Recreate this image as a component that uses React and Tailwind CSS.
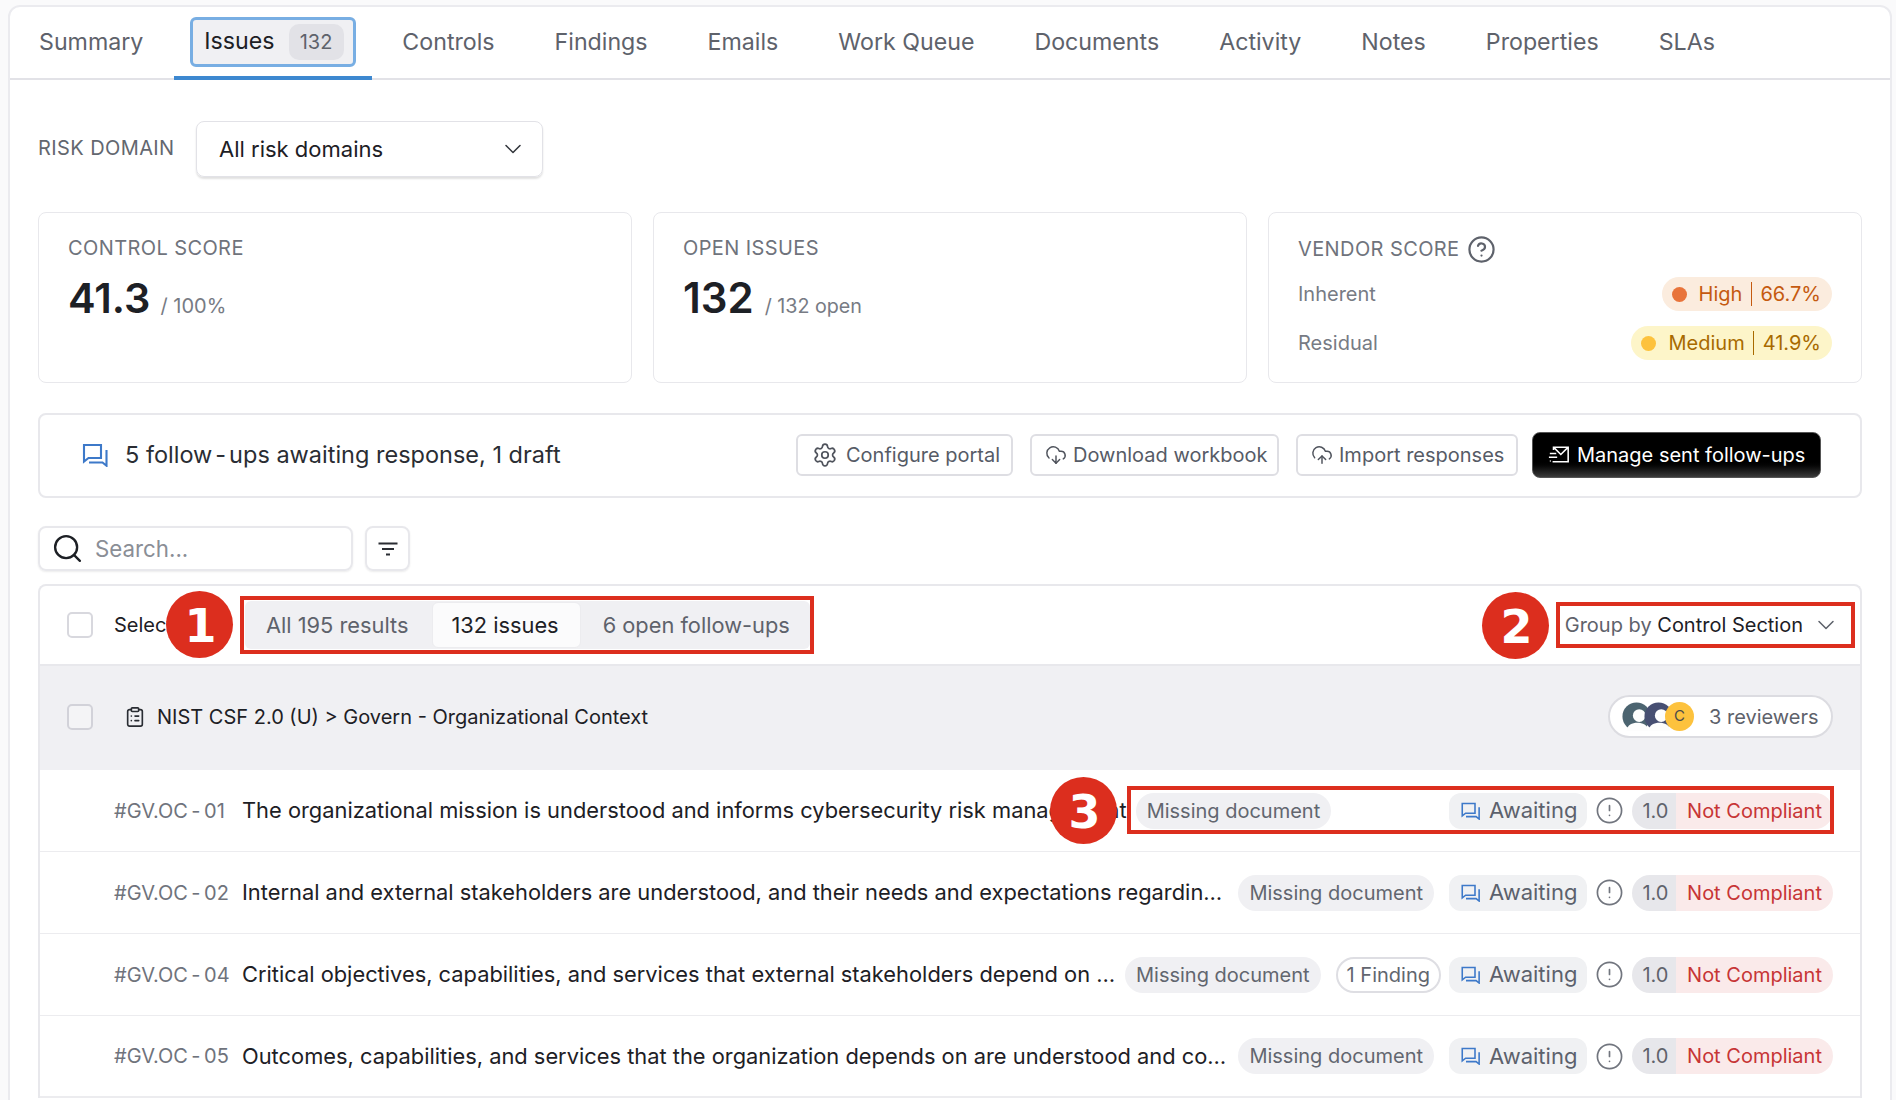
import React from "react";
import { ChevronDown, CircleHelp, Settings, CloudDownload, CloudUpload, Search, ClipboardList, CircleAlert } from "lucide-react";

const tabs = ["Controls", "Findings", "Emails", "Work Queue", "Documents", "Activity", "Notes", "Properties", "SLAs"];

function ChatIcon({ className }) {
  return (
    <svg viewBox="0 0 26 24" fill="none" stroke="currentColor" strokeWidth="2.1" className={className}>
      <path d="M2 2h17v13H6.5L2 18.5z" />
      <path d="M7 19.5h13.5l4 3.2V7" />
    </svg>
  );
}

function SendMail({ className }) {
  return (
    <svg viewBox="0 0 24 20" fill="none" stroke="currentColor" strokeWidth="1.7" className={className}>
      <path d="M6 5V2h16v16H5M6 2l8 8 8-8" />
      <path d="M2 9h7M1 13h9M3 17h-1" />
    </svg>
  );
}

function Avatar({ color, className }) {
  return (
    <svg viewBox="0 0 32 32" className={className}>
      <circle cx="16" cy="16" r="15.5" fill={color} />
      <circle cx="19" cy="15" r="7" fill="#fdfdfd" />
      <path d="M5 32c1-7 6-9 12-9s11 2 12 9z" fill="#fdfdfd" />
    </svg>
  );
}

function Badge({ n, className }) {
  return (
    <div className={`absolute z-10 flex h-[67px] w-[67px] items-center justify-center rounded-full bg-[#dc2e1e] pt-[3px] pl-[2px] font-['DejaVu_Sans',sans-serif] text-[46px] font-bold text-white ${className}`}>
      {n}
    </div>
  );
}

function IconButton({ icon, label, iconClass }) {
  return (
    <button className={`flex h-[42px] items-center rounded-[6px] border-2 border-[#dedee3] bg-white text-[20px] text-[#565b66] ${iconClass}`}>
      {icon}
      {label}
    </button>
  );
}

function Row({ num, title, finding }) {
  return (
    <div className="flex h-[82px] items-center border-b border-[#ececef] pl-[74px] pr-[27px] last:border-b-2">
      <span className="w-[128px] shrink-0 text-[20px] text-[#6f737c]">
        #GV.OC<span className="mx-[3.5px]">-</span>{num}
      </span>
      <span className="min-w-0 truncate text-[21.85px] text-[#1d2025]">{title}</span>
      <span className="ml-[9px] mr-[15px] flex h-[36px] shrink-0 items-center rounded-full bg-[#f0f0f3] px-[11px] text-[20px] text-[#62666f]">Missing document</span>
      {finding && (
        <span className="mr-[8px] flex h-[36px] shrink-0 items-center rounded-full border-2 border-[#dedee3] bg-white px-[9px] text-[20px] text-[#62666f]">1 Finding</span>
      )}
      <div className="ml-auto flex shrink-0 items-center">
        <span className="flex h-[36px] w-[138px] items-center rounded-[12px] bg-[#f0f1f3] pl-[11px] text-[22px] text-[#5c616c]">
          <ChatIcon className="mr-[8px] h-[18px] w-[21px] text-[#3d79c9]" />
          Awaiting
        </span>
        <CircleAlert className="mx-[8px] h-[29px] w-[29px] text-[#71757e]" strokeWidth={1.4} />
        <span className="flex h-[36px] overflow-hidden rounded-full text-[20px]">
          <span className="flex w-[44px] items-center justify-center bg-[#e7e7eb] pl-[3px] text-[#5f636c]">1.0</span>
          <span className="flex w-[157px] items-center justify-center bg-[#faeaea] text-[#c73535]">Not Compliant</span>
        </span>
      </div>
    </div>
  );
}

export default function App() {
  return (
    <div className="relative h-[1100px] overflow-hidden bg-[#fafafb] pl-[8px] pr-[4px] pt-[5px] font-['Inter',sans-serif]">
      <div className="h-[1200px] rounded-t-[12px] border-2 border-[#ebebef] bg-white">
        {/* Tabs */}
        <div className="flex h-[73px] items-stretch border-b-2 border-[#e2e2e7]">
          <div className="flex items-center pl-[29px] pr-[31px] text-[23.2px] text-[#5e626b]">Summary</div>
          <div className="mb-[-2px] flex w-[198px] items-center justify-center border-b-4 border-[#3d88d0]">
            <div className="flex h-[50px] w-[166px] items-center rounded-[6px] border-[3px] border-[#78aee3] bg-[#f0f0f3] pl-[11px] text-[23.2px] text-[#1d2025]">
              Issues
              <span className="ml-[14px] flex h-[36px] w-[55px] items-center justify-center rounded-[10px] bg-[#e2e2e7] text-[20px] text-[#5e626b]">132</span>
            </div>
          </div>
          {tabs.map((t) => (
            <div key={t} className="flex items-center px-[30px] text-[23.2px] text-[#5e626b]">{t}</div>
          ))}
        </div>

        <div className="px-[28px]">
          {/* Risk domain */}
          <div className="mt-[41px] flex items-center">
            <span className="w-[158px] pb-[2px] text-[20px] tracking-[0.4px] text-[#63676f]">RISK DOMAIN</span>
            <div className="flex h-[56px] w-[347px] items-center justify-between rounded-[8px] border border-[#e2e2e7] pl-[22px] pr-[15px] text-[22px] text-[#1d2025] shadow-[0_2px_2px_rgba(0,0,0,0.12)]">
              All risk domains
              <ChevronDown className="h-[28px] w-[28px] text-[#33363c]" strokeWidth={1.3} />
            </div>
          </div>

          {/* Cards */}
          <div className="mt-[35px] grid h-[171px] grid-cols-3 gap-[21px]">
            <div className="rounded-[8px] border border-[#e8e8ec] px-[29px] pt-[23px]">
              <div className="text-[20px] leading-[24px] tracking-[0.4px] text-[#6f737c]">CONTROL SCORE</div>
              <div className="mt-[12px] flex items-baseline">
                <span className="text-[41.5px] leading-[52px] font-semibold text-[#1d2025]">41.3</span>
                <span className="ml-[10px] text-[20px] text-[#777b84]">/ 100%</span>
              </div>
            </div>
            <div className="rounded-[8px] border border-[#e8e8ec] px-[29px] pt-[23px]">
              <div className="text-[20px] leading-[24px] tracking-[0.4px] text-[#6f737c]">OPEN ISSUES</div>
              <div className="mt-[12px] flex items-baseline">
                <span className="text-[42px] leading-[52px] font-semibold text-[#1d2025]">132</span>
                <span className="ml-[11px] text-[19.7px] text-[#777b84]">/ 132 open</span>
              </div>
            </div>
            <div className="rounded-[8px] border border-[#e8e8ec] pl-[29px] pr-[29px] pt-[23px]">
              <div className="flex h-[26px] items-center text-[20px] leading-[26px] tracking-[0.4px] text-[#6f737c]">
                VENDOR SCORE
                <CircleHelp className="ml-[7px] h-[29px] w-[29px] text-[#5e626b]" strokeWidth={1.8} />
              </div>
              <div className="mt-[15px] flex h-[34px] items-center justify-between text-[20px] text-[#777b84]">
                Inherent
                <span className="flex h-[34px] items-center rounded-full bg-[#fbecde] pl-[10px] pr-[11px] text-[#c55a10]">
                  <span className="mr-[12px] h-[15px] w-[15px] rounded-full bg-[#e8743b]" />
                  High
                  <span className="mx-[8.5px] h-[24px] w-px bg-[#c55a10]" />
                  66.7%
                </span>
              </div>
              <div className="mt-[15px] flex h-[34px] items-center justify-between text-[20px] text-[#777b84]">
                Residual
                <span className="flex h-[34px] items-center rounded-full bg-[#fdf5c9] pl-[10px] pr-[11px] text-[#a86a00]">
                  <span className="mr-[12px] h-[15px] w-[15px] rounded-full bg-[#fdc23d]" />
                  Medium
                  <span className="mx-[8.5px] h-[24px] w-px bg-[#a86a00]" />
                  41.9%
                </span>
              </div>
            </div>
          </div>

          {/* Follow-up bar */}
          <div className="mt-[30px] flex h-[85px] items-center rounded-[8px] border-2 border-[#e8e8ec] pb-[2px] pl-[42px] pr-[39px]">
            <ChatIcon className="h-[24px] w-[26px] text-[#3d79c9]" />
            <span className="ml-[17px] text-[23.5px] text-[#2a2d33]">
              5 follow<span className="mx-[3px]">-</span>ups awaiting response, 1 draft
            </span>
            <div className="ml-auto flex items-center">
              <IconButton iconClass="w-[217px] pl-[14px]" icon={<Settings className="mr-[8px] h-[26px] w-[26px] text-[#4f535c]" strokeWidth={1.6} />} label="Configure portal" />
              <IconButton iconClass="ml-[17px] w-[249px] pl-[13px]" icon={<CloudDownload className="mr-[6px] h-[22px] w-[22px] text-[#4f535c]" strokeWidth={1.6} />} label="Download workbook" />
              <IconButton iconClass="ml-[17px] w-[222px] pl-[13px]" icon={<CloudUpload className="mr-[6px] h-[22px] w-[22px] text-[#4f535c]" strokeWidth={1.6} />} label="Import responses" />
              <button className="ml-[14px] flex h-[46px] w-[289px] items-center rounded-[8px] border border-[#555] bg-linear-to-b from-black from-60% to-[#3b3b3b] pl-[15px] text-[20px] text-white">
                <SendMail className="mr-[7px] h-[19px] w-[22px]" />
                Manage sent follow-ups
              </button>
            </div>
          </div>

          {/* Search */}
          <div className="mt-[28px] flex items-center gap-[12px]">
            <div className="flex h-[45px] w-[315px] items-center rounded-[8px] border-2 border-[#e8e8ec] pl-[11px] text-[22.3px] text-[#8a8e96] shadow-[0_1px_2px_rgba(0,0,0,0.08)]">
              <Search className="mr-[11px] h-[33px] w-[33px] text-[#1d2025]" strokeWidth={1.7} />
              Search...
            </div>
            <div className="flex h-[45px] w-[45px] items-center justify-center rounded-[8px] border-2 border-[#e8e8ec] shadow-[0_1px_2px_rgba(0,0,0,0.08)]">
              <svg viewBox="0 0 20 14" className="h-[14px] w-[20px]" fill="none" stroke="#2a2d33" strokeWidth="2.2">
                <path d="M0.5 1.5h19M4 7h12M8 12.5h4" />
              </svg>
            </div>
          </div>

          {/* Table */}
          <div className="mt-[13px] rounded-t-[8px] border-2 border-b-0 border-[#e8e8ec]">
            <div className="flex h-[78px] items-center pl-[27px] pr-[8px]">
              <span className="h-[26px] w-[26px] rounded-[5px] border-2 border-[#d8d8de] bg-white" />
              <span className="ml-[21px] w-[131px] text-[20px] text-[#1d2025]">Select all</span>
              <div className="flex h-[48px] w-[565px] shrink-0 items-center whitespace-nowrap rounded-[6px] bg-[#f0f0f3] text-[21.8px] text-[#5e626b]">
                <span className="pl-[21px] pr-[24px]">All 195 results</span>
                <span className="flex h-[46px] items-center rounded-[6px] border border-[#ececef] bg-[#fbfbfc] pl-[18px] pr-[21px] text-[#1d2025]">132 issues</span>
                <span className="pl-[22px]">6 open follow-ups</span>
              </div>
              <div className="ml-auto mr-[12px] flex items-center text-[20px] text-[#5e626b]">
                Group by&nbsp;<span className="text-[#1d2025]">Control Section</span>
                <ChevronDown className="ml-[9px] h-[28px] w-[28px] text-[#5e626b]" strokeWidth={1.3} />
              </div>
            </div>
            <div className="flex h-[106px] items-center border-t-2 border-[#e8e8ec] bg-[#f0f0f3] pb-[3px] pl-[27px] pr-[27px]">
              <span className="h-[26px] w-[26px] rounded-[5px] border-2 border-[#d2d2d9] bg-[#f4f4f6]" />
              <ClipboardList className="ml-[31px] h-[22px] w-[22px] text-[#2a2d33]" strokeWidth={1.8} />
              <span className="ml-[11px] text-[20px] text-[#1d2025]">NIST CSF 2.0 (U) &gt; Govern - Organizational Context</span>
              <div className="ml-auto flex h-[43px] w-[225px] items-center rounded-full border-2 border-[#dcdce1] bg-white pl-[12px] text-[20px] text-[#5e626b]">
                <Avatar color="#4c6470" className="h-[29px] w-[29px]" />
                <Avatar color="#474f72" className="ml-[-7px] h-[29px] w-[29px]" />
                <span className="ml-[-8px] flex h-[29px] w-[29px] items-center justify-center rounded-full bg-[#fdc23d] text-[15px] text-[#4b4b4b]">C</span>
                <span className="ml-[15px]">3 reviewers</span>
              </div>
            </div>
            <Row num="01" title="The organizational mission is understood and informs cybersecurity risk management" />
            <Row num="02" title="Internal and external stakeholders are understood, and their needs and expectations regarding cybersecurity risk management are considered" />
            <Row num="04" title="Critical objectives, capabilities, and services that external stakeholders depend on or expect from the organization are understood and communicated" finding />
            <Row num="05" title="Outcomes, capabilities, and services that the organization depends on are understood and communicated" />
          </div>
        </div>
      </div>

      {/* Annotations */}
      <Badge n="1" className="left-[166px] top-[591px]" />
      <div className="absolute left-[240px] top-[596px] h-[58px] w-[574px] border-4 border-[#dc2e1e]" />
      <Badge n="2" className="left-[1482px] top-[592px]" />
      <div className="absolute left-[1556px] top-[602px] h-[46px] w-[299px] border-4 border-[#dc2e1e]" />
      <Badge n="3" className="left-[1050px] top-[777px]" />
      <div className="absolute left-[1127px] top-[786px] h-[48px] w-[707px] border-4 border-[#dc2e1e]" />
    </div>
  );
}
